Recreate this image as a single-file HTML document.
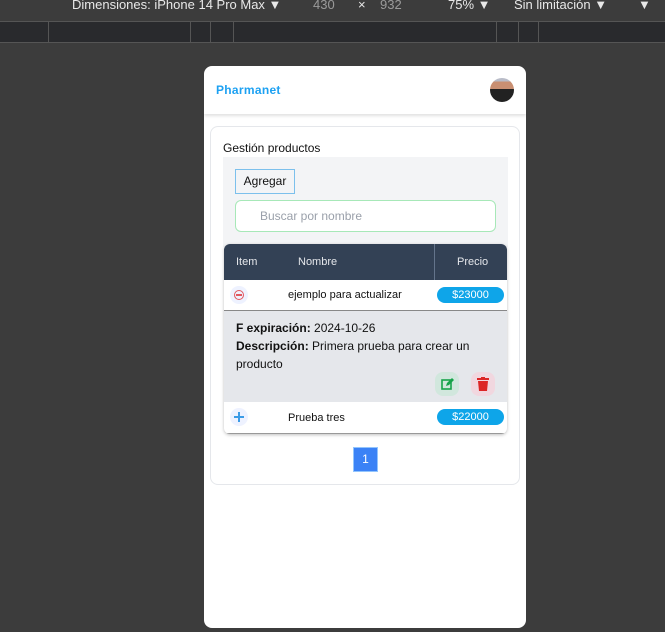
<html><head><style>
*{margin:0;padding:0;box-sizing:border-box}
body{width:665px;height:632px;background:#3c3c3c;font-family:"Liberation Sans",sans-serif;position:relative;overflow:hidden}
.a{position:absolute}
</style></head><body>
<div class="a" style="left:0;top:0;width:665px;height:21px;background:#3c3c3c;color:#e8e8e8;font-size:13px">
<span class="a" style="left:72px;top:-3px">Dimensiones: iPhone 14 Pro Max ▼</span>
<span class="a" style="left:313px;top:-3px;color:#9a9a9a">430</span>
<span class="a" style="left:358px;top:-3px">×</span>
<span class="a" style="left:380px;top:-3px;color:#9a9a9a">932</span>
<span class="a" style="left:448px;top:-3px">75% ▼</span>
<span class="a" style="left:514px;top:-3px">Sin limitación ▼</span>
<span class="a" style="left:638px;top:-3px">▼</span>
</div>
<div class="a" style="left:0;top:21px;width:665px;height:22px;background:#292a2d;border-top:1px solid #555;border-bottom:1px solid #555"></div>
<div class="a" style="left:48px;top:21px;width:1px;height:22px;background:#555"></div>
<div class="a" style="left:190px;top:21px;width:1px;height:22px;background:#555"></div>
<div class="a" style="left:210px;top:21px;width:1px;height:22px;background:#555"></div>
<div class="a" style="left:233px;top:21px;width:1px;height:22px;background:#555"></div>
<div class="a" style="left:496px;top:21px;width:1px;height:22px;background:#555"></div>
<div class="a" style="left:518px;top:21px;width:1px;height:22px;background:#555"></div>
<div class="a" style="left:538px;top:21px;width:1px;height:22px;background:#555"></div>

<div class="a" style="left:204px;top:66px;width:322px;height:562px;background:#fff;border-radius:8px;overflow:hidden">
 <div class="a" style="left:0;top:0;width:322px;height:48px;box-shadow:0 2px 3px rgba(0,0,0,.12)">
  <span class="a" style="left:12px;top:17px;color:#1da1f2;font-weight:bold;font-size:12px;letter-spacing:.3px">Pharmanet</span>
  <div class="a" style="left:286px;top:12px;width:24px;height:24px;border-radius:50%;background:linear-gradient(180deg,#b9bcc8 0 15%,#c98f72 15% 45%,#222 45%)"></div>
 </div>
 <div class="a" style="left:6px;top:60px;width:310px;height:359px;border:1px solid #e5e7eb;border-radius:8px">
  <span class="a" style="left:12px;top:14px;font-size:12px;color:#111">Gestión productos</span>
  <div class="a" style="left:12px;top:30px;width:285px;height:90px;background:#f3f4f6"></div>
  <div class="a" style="left:24px;top:42px;width:60px;height:25px;border:1px solid #7cc0ec;background:#f3f4f6;font-size:12px;text-align:center;line-height:23px;color:#111">Agregar</div>
  <div class="a" style="left:24px;top:73px;width:261px;height:32px;border:1px solid #a7e8b8;border-radius:6px;background:#fff;font-size:12px;color:#9aa0aa;line-height:30px;padding-left:24px">Buscar por nombre</div>
  <div class="a" style="left:13px;top:117px;width:283px;height:190px;border-radius:6px;box-shadow:0 1px 3px rgba(0,0,0,.25);background:#fff;overflow:hidden">
   <div class="a" style="left:0;top:0;width:283px;height:36px;background:#334155;color:#e5e7eb;font-size:11px">
    <span class="a" style="left:12px;top:12px">Item</span>
    <span class="a" style="left:74px;top:12px">Nombre</span>
    <div class="a" style="left:210px;top:0;width:1px;height:36px;background:#64748b"></div>
    <span class="a" style="left:233px;top:12px">Precio</span>
   </div>
   <div class="a" style="left:0;top:36px;width:283px;height:31px;border-bottom:1px solid #888;font-size:11px;color:#111">
    <div class="a" style="left:6px;top:6px;width:18px;height:18px;border-radius:50%;background:#eef2ff"></div>
    <div class="a" style="left:10px;top:10px;width:10px;height:10px;border-radius:50%;border:1px solid #e2565f"></div>
    <div class="a" style="left:12px;top:14px;width:6px;height:1.5px;background:#e2565f"></div>
    <span class="a" style="left:64px;top:9px">ejemplo para actualizar</span>
    <div class="a" style="left:213px;top:7px;width:67px;height:16px;border-radius:8px;background:#0ea5e9;color:#fff;text-align:center;line-height:16px">$23000</div>
   </div>
   <div class="a" style="left:0;top:67px;width:283px;height:91px;background:#e5e7eb;font-size:12px;color:#111;line-height:18px">
    <div class="a" style="left:12px;top:8px;width:250px"><b>F expiración:</b> 2024-10-26<br><b>Descripción:</b> Primera prueba para crear un producto</div>
    <div class="a" style="left:211px;top:61px;width:24px;height:24px;border-radius:8px;background:#d1e7dd"></div>
    <svg class="a" style="left:216px;top:66px" width="14" height="14" viewBox="0 0 14 14"><rect x="2" y="3" width="9" height="9" fill="none" stroke="#16a34a" stroke-width="1.6"/><path d="M6 9l1-3 5-5 2 2-5 5z" fill="#16a34a"/></svg>
    <div class="a" style="left:247px;top:61px;width:24px;height:24px;border-radius:8px;background:#f1d7df"></div>
    <svg class="a" style="left:253px;top:66px" width="12" height="14" viewBox="0 0 12 14"><rect x="0" y="1" width="12" height="2" fill="#dc2626"/><rect x="4" y="0" width="4" height="2" fill="#dc2626"/><path d="M1 4h10l-1 10H2z" fill="#dc2626"/></svg>
   </div>
   <div class="a" style="left:0;top:158px;width:283px;height:32px;font-size:11px;color:#111;border-bottom:1px solid #999">
    <div class="a" style="left:6px;top:6px;width:18px;height:18px;border-radius:50%;background:#eef2ff"></div>
    <div class="a" style="left:10px;top:14px;width:10px;height:2px;background:#3b9be6"></div>
    <div class="a" style="left:14px;top:10px;width:2px;height:10px;background:#3b9be6"></div>
    <span class="a" style="left:64px;top:10px">Prueba tres</span>
    <div class="a" style="left:213px;top:7px;width:67px;height:16px;border-radius:8px;background:#0ea5e9;color:#fff;text-align:center;line-height:16px">$22000</div>
   </div>
  </div>
  <div class="a" style="left:142px;top:320px;width:25px;height:25px;background:#3b82f6;border:1px solid #93c5fd;color:#fff;font-size:12px;text-align:center;line-height:23px">1</div>
 </div>
</div>
</body></html>
